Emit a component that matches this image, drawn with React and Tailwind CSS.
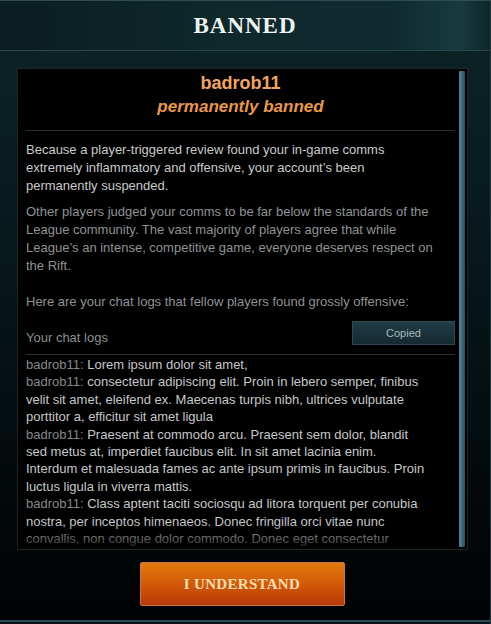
import React from 'react';

const logs = [
  ['Lorem ipsum dolor sit amet,'],
  ['consectetur adipiscing elit. Proin in lebero semper, finibus', 'velit sit amet, eleifend ex. Maecenas turpis nibh, ultrices vulputate', 'porttitor a, efficitur sit amet ligula'],
  ['Praesent at commodo arcu. Praesent sem dolor, blandit', 'sed metus at, imperdiet faucibus elit. In sit amet lacinia enim.', 'Interdum et malesuada fames ac ante ipsum primis in faucibus. Proin', 'luctus ligula in viverra mattis.'],
  ['Class aptent taciti sociosqu ad litora torquent per conubia', 'nostra, per inceptos himenaeos. Donec fringilla orci vitae nunc', 'convallis, non congue dolor commodo. Donec eget consectetur'],
];

const App = () => {
  return (
    <div className="w-[491px] h-[624px] flex flex-col overflow-hidden border-t border-[#2f4d52] border-r border-r-[#24393d] bg-[linear-gradient(180deg,#0c2427_0%,#0b2124_12%,#07181b_40%,#030a0c_75%,#010203_100%)] font-['Liberation_Sans',Arial,sans-serif]">
      <div className="h-[50px] shrink-0 flex items-center justify-center border-b border-[#2a4649] bg-[linear-gradient(90deg,#0a1d20_0%,#0e282c_45%,#0f2a2e_80%,#183a3f_94%,#0e2629_100%)]">
        <h1 className="text-[23px] font-bold tracking-[1px] text-[#eef3f2] font-['Liberation_Serif',serif] leading-none">BANNED</h1>
      </div>

      <div className="pt-[17px] pl-[17px]">
        <div className="w-[451px] h-[482px] bg-black border border-[#1c2628] flex">
          <div className="flex-1 pl-[8px] pr-[4px] flex flex-col min-w-0">
            <div className="text-center pt-[2px]">
              <div className="text-[18px] font-bold leading-[24px] text-[#f1a65f]">badrob11</div>
              <div className="text-[17px] font-bold italic leading-[24px] text-[#e9984a]">permanently banned</div>
            </div>
            <div className="mt-[11px] border-t border-[#2a2d2e]" />
            <div className="text-[13px] leading-[18px] pt-[10px]">
              <p className="text-[#c9cbcb]">
                Because a player-triggered review found your in-game comms<br />
                extremely inflammatory and offensive, your account’s been<br />
                permanently suspended.
              </p>
              <p className="text-[#8f9393] mt-[8px]">
                Other players judged your comms to be far below the standards of the<br />
                League community. The vast majority of players agree that while<br />
                League’s an intense, competitive game, everyone deserves respect on<br />
                the Rift.
              </p>
              <p className="text-[#8f9393] mt-[18px]">
                Here are your chat logs that fellow players found grossly offensive:
              </p>
            </div>
            <div className="flex items-end justify-between mt-[10px]">
              <span className="text-[13px] leading-[18px] text-[#8a8e8e]">Your chat logs</span>
              <button className="w-[103px] h-[24px] mb-[2px] text-[11px] text-[#a9b9bc] bg-[linear-gradient(180deg,#203c46,#152a31)] border border-[#2b4b54]">
                Copied
              </button>
            </div>
            <div className="mt-[7px] border-t border-[#2c3030]" />
            <div className="relative flex-1 overflow-hidden pt-[1px] text-[13px] leading-[17.4px] text-[#c6c8c8]">
              {logs.map((lines, i) => (
                <div key={i}>
                  <span className="text-[#858a8a]">badrob11: </span>
                  {lines.map((l, j) => (
                    <React.Fragment key={j}>
                      {j > 0 && <br />}
                      {l}
                    </React.Fragment>
                  ))}
                </div>
              ))}
              <div className="absolute left-0 right-0 bottom-0 h-[26px] bg-[linear-gradient(180deg,rgba(0,0,0,0),rgba(0,0,0,0.85))]" />
            </div>
          </div>
          <div className="w-[8px] flex flex-col py-[2px] pr-[2px]">
            <div className="flex-1 w-[6px] rounded-[1px] bg-[linear-gradient(90deg,#5a8696,#3a6475_60%,#2c4f5e)]" />
          </div>
        </div>
      </div>

      <div className="flex justify-center pt-[12px] pr-[6px]">
        <button className="w-[205px] h-[44px] rounded-[2px] border border-[#c8763a] bg-[linear-gradient(180deg,#e27a0e_0%,#d25a08_50%,#b8380a_100%)] text-[15px] font-bold text-[#f6dfb4] font-['Liberation_Serif',serif] tracking-[0.3px] shadow-[0_0_4px_rgba(0,0,0,0.8)]">
          I UNDERSTAND
        </button>
      </div>

      <div className="mt-auto h-[4px] border-t-2 border-[#2c4b56] bg-[#0a1418]" />
    </div>
  );
};

export default App;
